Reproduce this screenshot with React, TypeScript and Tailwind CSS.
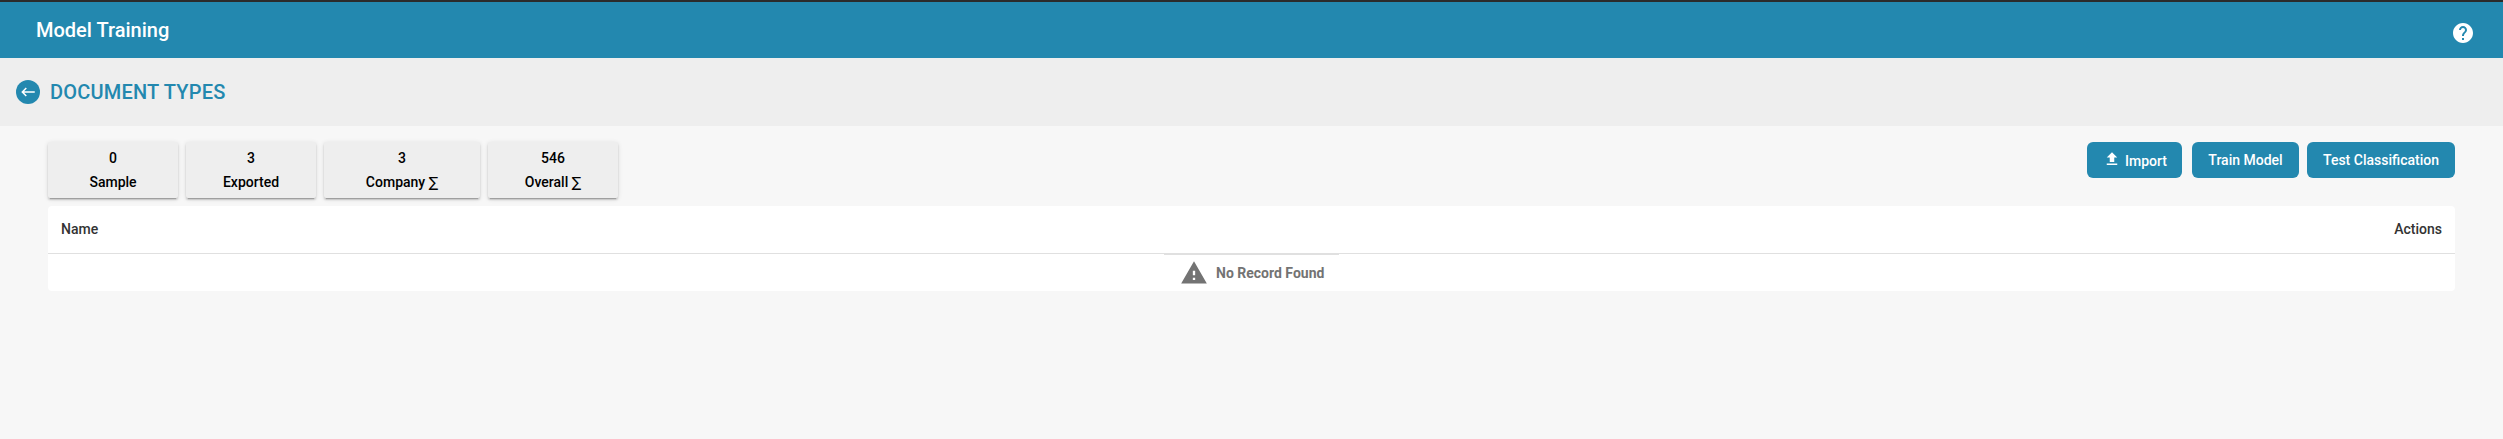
import React from "react";
import { MdFileUpload, MdHelp, MdWarning, MdKeyboardBackspace } from "react-icons/md";

const stats = [
  { value: "0", label: "Sample", width: "w-[130px]" },
  { value: "3", label: "Exported", width: "w-[130px]" },
  { value: "3", label: "Company", sum: true, width: "w-[156px]" },
  { value: "546", label: "Overall", sum: true, width: "w-[130px]" },
];

export default function App() {
  return (
    <div className="flex h-[439px] w-full flex-col bg-[#f7f7f7] font-['Roboto',sans-serif] font-medium">
      <header className="flex h-[58px] shrink-0 items-center justify-between border-t-2 border-[#2b2b2b] bg-[#2388af] pr-7 pl-9 text-white">
        <h1 className="text-xl leading-8">Model Training</h1>
        <MdHelp className="mt-1.5 size-6" />
      </header>
      <div className="flex h-[68px] shrink-0 items-center gap-2.5 bg-[#eeeeee] pl-4 text-[#2388af]">
        <button className="flex size-6 items-center justify-center rounded-full bg-[#2388af] text-white">
          <MdKeyboardBackspace className="size-[18px]" />
        </button>
        <h2 className="text-xl leading-8 tracking-[0.2px]">DOCUMENT TYPES</h2>
      </div>
      <main className="flex flex-col gap-2 px-12 pt-4 text-sm">
        <div className="flex items-start justify-between">
          <div className="flex gap-2">
            {stats.map((s) => (
              <div
                key={s.label}
                className={`flex h-14 flex-col items-center rounded-[2px] bg-[#eeeeee] pt-1 leading-6 text-black shadow-[0_3px_1px_-2px_rgba(0,0,0,0.2),0_2px_2px_0_rgba(0,0,0,0.14),0_1px_5px_0_rgba(0,0,0,0.12)] ${s.width}`}
              >
                <span>{s.value}</span>
                <span>
                  {s.label}
                  {s.sum && (
                    <>
                      {" "}
                      <span className="font-['DejaVu_Sans',sans-serif] font-normal">∑</span>
                    </>
                  )}
                </span>
              </div>
            ))}
          </div>
          <div className="flex text-white">
            <button className="mr-2.5 flex h-9 w-[95px] items-center rounded-md bg-[#2388af] pl-4">
              <MdFileUpload className="-mt-0.5 mr-1 size-[18px]" />
              <span className="pt-0.5">Import</span>
            </button>
            <button className="mr-2 h-9 w-[107px] rounded-md bg-[#2388af]">Train Model</button>
            <button className="h-9 w-[148px] rounded-md bg-[#2388af]">Test Classification</button>
          </div>
        </div>
        <section className="h-[85px] rounded bg-white">
          <div className="flex h-12 items-center justify-between border-b border-[#e0e0e0] px-[13px] pb-px text-[#333333]">
            <span>Name</span>
            <span>Actions</span>
          </div>
          <div className="mx-auto flex h-[37px] w-[175px] items-center border-t border-[#e0e0e0] pl-4 font-bold text-[#737373]">
            <MdWarning className="mr-2 size-7" />
            <span>No Record Found</span>
          </div>
        </section>
      </main>
    </div>
  );
}
